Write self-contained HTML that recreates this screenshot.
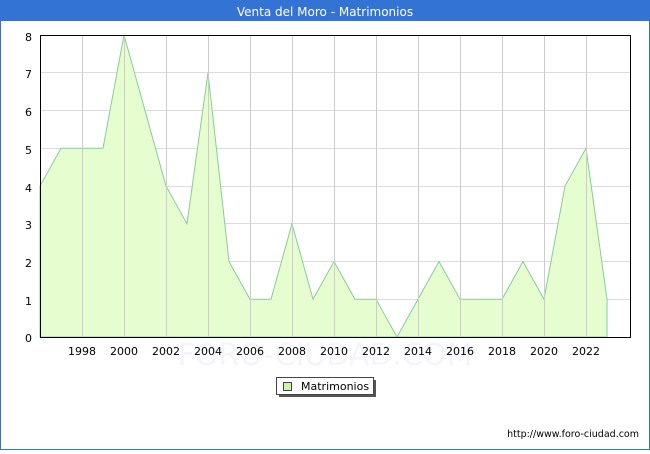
<!DOCTYPE html>
<html><head><meta charset="utf-8"><style>
body{margin:0;width:650px;height:450px;overflow:hidden;background:#fff;font-family:"DejaVu Sans","Liberation Sans",sans-serif}
</style></head><body>
<svg width="650" height="450" xmlns="http://www.w3.org/2000/svg" font-family="DejaVu Sans, Liberation Sans, sans-serif">
<rect x="0.5" y="0.5" width="649" height="449" fill="#fff" stroke="#3373d4"/>
<rect x="0" y="0" width="650" height="21" fill="#3373d4"/>
<text x="325" y="16" font-size="12" fill="#fff" text-anchor="middle">Venta del Moro - Matrimonios</text>
<text x="325" y="365" font-size="30" fill="#f3f4fc" text-anchor="middle">FORO-CIUDAD.COM</text>
<g stroke="#dcdcdc" stroke-width="1">
<line x1="40" x2="630" y1="72.5" y2="72.5"/><line x1="40" x2="630" y1="110.5" y2="110.5"/><line x1="40" x2="630" y1="148.5" y2="148.5"/><line x1="40" x2="630" y1="186.5" y2="186.5"/><line x1="40" x2="630" y1="223.5" y2="223.5"/><line x1="40" x2="630" y1="261.5" y2="261.5"/><line x1="40" x2="630" y1="299.5" y2="299.5"/>
</g>
<polygon fill="#e6fdd0" stroke="#88cc99" stroke-width="1" points="40,337 40,186 61,148.25 82,148.25 103,148.25 124,35 145,110.5 166,186 187,223.75 208,72.75 229,261.5 250,299.25 271,299.25 292,223.75 313,299.25 334,261.5 355,299.25 376,299.25 397,337 418,299.25 439,261.5 460,299.25 481,299.25 502,299.25 523,261.5 544,299.25 565,186 586,148.25 607,299.25 607,337"/>
<g stroke="#cccccc" stroke-width="1">
<line x1="82.5" x2="82.5" y1="35" y2="337"/><line x1="124.5" x2="124.5" y1="35" y2="337"/><line x1="166.5" x2="166.5" y1="35" y2="337"/><line x1="208.5" x2="208.5" y1="35" y2="337"/><line x1="250.5" x2="250.5" y1="35" y2="337"/><line x1="292.5" x2="292.5" y1="35" y2="337"/><line x1="334.5" x2="334.5" y1="35" y2="337"/><line x1="376.5" x2="376.5" y1="35" y2="337"/><line x1="418.5" x2="418.5" y1="35" y2="337"/><line x1="460.5" x2="460.5" y1="35" y2="337"/><line x1="502.5" x2="502.5" y1="35" y2="337"/><line x1="544.5" x2="544.5" y1="35" y2="337"/><line x1="586.5" x2="586.5" y1="35" y2="337"/>
</g>
<rect x="40.5" y="35.5" width="590" height="302" fill="none" stroke="#000"/>
<g font-size="11" fill="#000" text-anchor="end">
<text x="32" y="41">8</text><text x="32" y="78">7</text><text x="32" y="116">6</text><text x="32" y="154">5</text><text x="32" y="192">4</text><text x="32" y="229">3</text><text x="32" y="267">2</text><text x="32" y="305">1</text><text x="32" y="342">0</text>
</g>
<g font-size="11" fill="#000" text-anchor="middle">
<text x="82" y="355">1998</text><text x="124" y="355">2000</text><text x="166" y="355">2002</text><text x="208" y="355">2004</text><text x="250" y="355">2006</text><text x="292" y="355">2008</text><text x="334" y="355">2010</text><text x="376" y="355">2012</text><text x="418" y="355">2014</text><text x="460" y="355">2016</text><text x="502" y="355">2018</text><text x="544" y="355">2020</text><text x="586" y="355">2022</text>
</g>
<rect x="279" y="380" width="97" height="17" fill="#555"/>
<rect x="276.5" y="377.5" width="97" height="17" fill="#fff" stroke="#444"/>
<rect x="283.5" y="382.5" width="8" height="8" fill="#ccf5a8" stroke="#444"/>
<text x="301" y="390" font-size="11">Matrimonios</text>
<text x="639" y="437" font-size="9.5" text-anchor="end">http://www.foro-ciudad.com</text>
</svg>
</body></html>
